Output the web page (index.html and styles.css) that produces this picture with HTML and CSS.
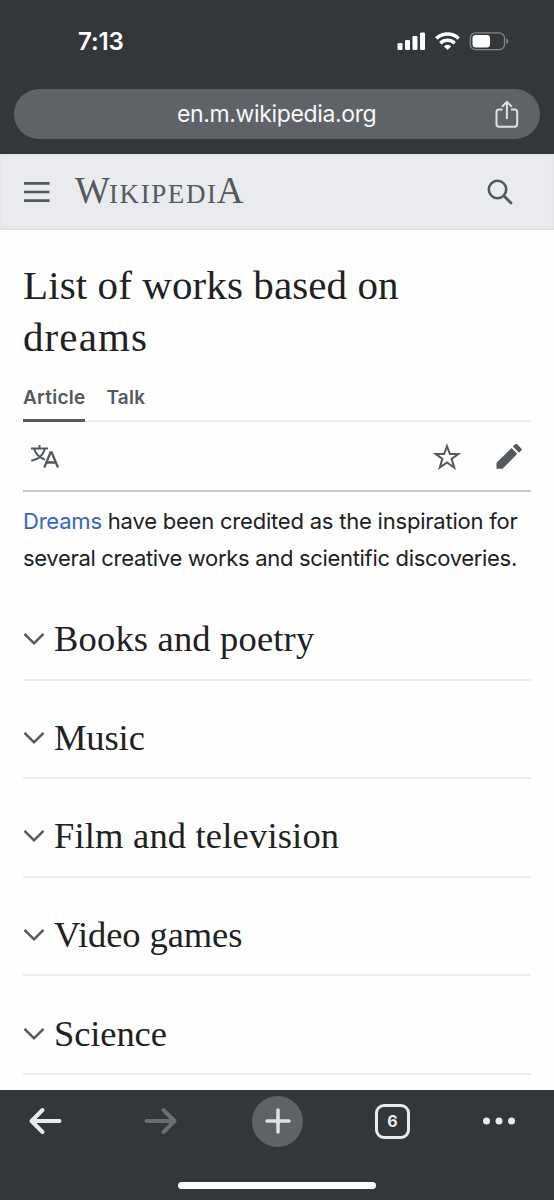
FILE: index.html
```html
<!DOCTYPE html>
<html lang="en">
<head>
<meta charset="utf-8">
<title>List of works based on dreams</title>
<link rel="stylesheet" href="styles.css">
</head>
<body>
<header class="browser-top">
  <div class="status">
    <span class="time">7:13</span>
    <svg class="status-icons" width="112" height="20" viewBox="0 0 112 20">
      <g fill="#fff">
        <rect x="0.5" y="11" width="5" height="7" rx="1.3"/>
        <rect x="8" y="8" width="5" height="10" rx="1.3"/>
        <rect x="15.500" y="4" width="5" height="14" rx="1.3"/>
        <rect x="23" y="0.500" width="5" height="17.500" rx="1.300"/>
      </g>
      <g fill="none" stroke="#fff" stroke-width="3.500">
        <path d="M39.300 6.600a16 16 0 0 1 22.400 0"/>
        <path d="M43.300 11.200a10.300 10.300 0 0 1 14.400 0"/>
      </g>
      <path d="M50.500 18l-3.700-3.700a5.300 5.300 0 0 1 7.400 0z" fill="#fff"/>
      <rect x="73.300" y="0.800" width="34.200" height="16.900" rx="5.300" fill="none" stroke="#85888a" stroke-width="1.300"/>
      <rect x="75.500" y="3" width="17.500" height="12.500" rx="3.300" fill="#fff"/>
      <path d="M109.300 6.200q1.900 1 1.900 3t-1.900 3z" fill="#85888a"/>
    </svg>
  </div>
  <div class="address">
    <span class="url">en.m.wikipedia.org</span>
    <svg class="share" width="26" height="30" viewBox="0 0 26 30" fill="none" stroke="#dfe1e5" stroke-width="2">
      <path d="M8.500 10.500H5Q2.500 10.500 2.500 13V25Q2.500 27.800 5 27.800H20.500Q23.200 27.800 23.200 25V13Q23.200 10.500 20.500 10.500H17M12.900 20V3M8 7.700L12.900 2.800L17.800 7.700"/>
    </svg>
  </div>
</header>

<nav class="site-header">
  <svg class="menu" width="26" height="22" viewBox="0 0 26 22" fill="#54595d"><path d="M0 1.100h25.500v2.600H0zM0 9.700h25.500v2.600H0zM0 18.300h25.500v2.600H0z"/></svg>
  <span class="wordmark"><span class="big">W</span><span class="small">IKIPEDI</span><span class="big last">A</span></span>
  <svg class="search" width="28" height="28" viewBox="0 0 28 28" fill="none" stroke="#54595d"><circle cx="11.500" cy="11.500" r="8.700" stroke-width="2.600"/><path d="M17.800 17.800L25 25" stroke-width="2.800" stroke-linecap="round"/></svg>
</nav>

<main class="page">
  <h1>List of works based on<br><span class="title-end">dreams</span></h1>
  <div class="tabs"><span class="tab active">Article</span><span class="tab talk">Talk</span></div>
  <div class="tools">
    <svg class="language" width="30" height="26" viewBox="0 0 30 26" fill="none" stroke="#54595d" stroke-width="2"><path d="M1 4.600H18M9.500 1V4.600M4.200 5C6 11 10.500 14 15 15.600M14.800 5C13 11.500 8 15.500 1.300 16.800"/><path d="M14.300 23.500L20.500 8.500H21.700L28 23.500M16.500 18.500H25.800" stroke-width="2.300"/></svg>
    <span class="actions">
      <svg width="28" height="28" viewBox="0 0 28 28" fill="none" stroke="#54595d" stroke-width="2"><path d="M14 3.200L16.900 11H25.200L18.600 15.900L21.200 24.500L14 19.400L6.800 24.500L9.400 15.900L2.800 11H11.100Z"/></svg>
      <svg width="28" height="28" viewBox="0 0 28 28" fill="#54595d"><path d="M1.500 19.700L16.500 5L22.300 10.800L7.500 25.800H1.500ZM17.900 3.600L20.200 1.300Q21.200 .3 22.200 1.300L26.300 5.400Q27.300 6.400 26.300 7.400L24 9.700Z"/></svg>
    </span>
  </div>
  <p class="intro"><span class="one"><a>Dreams</a> have been credited as the inspiration for</span><br><span class="two">several creative works and scientific discoveries.</span></p>
  <section><svg class="chevron" viewBox="0 0 22 14"><path d="M1.500 1.800L11 11.300L20.500 1.800"/></svg><h2>Books and poetry</h2></section>
  <section><svg class="chevron" viewBox="0 0 22 14"><path d="M1.500 1.800L11 11.300L20.500 1.800"/></svg><h2 class="compact">Music</h2></section>
  <section><svg class="chevron" viewBox="0 0 22 14"><path d="M1.500 1.800L11 11.300L20.500 1.800"/></svg><h2>Film and television</h2></section>
  <section><svg class="chevron" viewBox="0 0 22 14"><path d="M1.500 1.800L11 11.300L20.500 1.800"/></svg><h2 class="compact">Video games</h2></section>
  <section><svg class="chevron" viewBox="0 0 22 14"><path d="M1.500 1.800L11 11.300L20.500 1.800"/></svg><h2 class="compact">Science</h2></section>
</main>

<footer class="browser-bottom">
  <div class="controls">
    <svg width="34" height="28" viewBox="0 0 34 28" fill="none" stroke="#e8eaed" stroke-width="4" stroke-linecap="round" stroke-linejoin="round"><path d="M31.500 14H3.500M14.500 3L3.500 14L14.500 25"/></svg>
    <svg class="forward" width="34" height="28" viewBox="0 0 34 28" fill="none" stroke="#6b6e70" stroke-width="4" stroke-linecap="round" stroke-linejoin="round"><path d="M2.500 14H30.500M19.500 3L30.500 14L19.500 25"/></svg>
    <span class="new-tab"><svg width="28" height="28" viewBox="0 0 28 28" stroke="#dfe1e5" stroke-width="3.500" stroke-linecap="round"><path d="M14 3V25M3 14H25"/></svg></span>
    <span class="tab-count">6</span>
    <svg class="more" width="34" height="10" viewBox="0 0 34 10" fill="#e8eaed"><circle cx="4.500" cy="5" r="3.500"/><circle cx="17" cy="5" r="3.500"/><circle cx="29.500" cy="5" r="3.500"/></svg>
  </div>
  <div class="home-indicator"></div>
</footer>
</body>
</html>
```

FILE: styles.css
```css
* { box-sizing: border-box; }
body { margin: 0; width: 554px; height: 1200px; overflow: hidden; display: flex; flex-direction: column; background: #fefefe; color: #202122; font-family: Inter, sans-serif; }
svg { display: block; flex: none; }
span, h1, h2 { white-space: nowrap; }
.browser-top { height: 154px; flex: none; background: #34373a; padding: 0 14px; color: #fff; }
.status { height: 89px; display: flex; justify-content: space-between; padding: 32px 31px 0 64px; }
.time { font-size: 24px; font-weight: 600; line-height: 20px; letter-spacing: -.1px; }
.address { height: 50px; border-radius: 25px; background: #5f6367; display: flex; justify-content: space-between; padding: 0 20px 0 163px; align-items: center; }
.url { font-size: 23px; line-height: 50px; letter-spacing: -.36px; color: #f8f9fa; }
.site-header { height: 76px; flex: none; background: #eaebef; border-top: 1px solid #dfe0e4; border-bottom: 1px solid #dfe0e4; box-shadow: inset 0 0 4px #e1e2e6; display: flex; align-items: center; padding: 0 40px 0 24px; }
.wordmark { font-family: "Liberation Serif", serif; color: #54595d; display: flex; align-items: baseline; margin-left: 25px; line-height: 40px; }
.big { font-size: 37px; }
.small { font-size: 27px; letter-spacing: 1.6px; margin-left: -1px; }
.last { margin-left: -1px; }
.search { margin-left: auto; }
.page { flex: 1; padding: 29px 23px 0; min-height: 0; }
h1, h2 { margin: 0; font-family: "Liberation Serif", serif; font-weight: 400; }
h1 { font-size: 41px; line-height: 52px; letter-spacing: .1px; }
.title-end { letter-spacing: 1.1px; }
.tabs { height: 59px; display: flex; gap: 21px; border-bottom: 2px solid #eaecf0; font-size: 19px; font-weight: 600; color: #54595d; line-height: 24px; padding-top: 23px; letter-spacing: .25px; }
.tab { height: 36px; }
.active { border-bottom: 3px solid #54595d; }
.tools { height: 70px; border-bottom: 2px solid #c8ccd1; display: flex; justify-content: space-between; align-items: center; padding: 2px 8px 0 7px; }
.actions { display: flex; gap: 34px; }
.intro { margin: 11px 0 0; height: 79px; font-size: 22px; line-height: 37px; }
.one { letter-spacing: -.21px; }
.two { letter-spacing: -.32px; }
.intro a { color: #3366cc; }
section { height: 98.6px; border-bottom: 2px solid #eaecf0; display: flex; align-items: center; padding-top: 18px; }
.chevron { width: 22px; height: 14px; fill: none; stroke: #54595d; stroke-width: 2.5; }
h2 { font-size: 36.5px; line-height: 50px; margin-left: 9px; letter-spacing: .18px; }
.compact { letter-spacing: -.1px; }
.browser-bottom { height: 110px; flex: none; background: #34373a; }
.controls { height: 62px; display: flex; align-items: center; padding-left: 28px; }
.forward { margin-left: 82px; }
.new-tab { width: 51px; height: 51px; margin-left: 74px; border-radius: 50%; background: #5f6367; display: grid; place-items: center; }
.tab-count { width: 35px; height: 35px; margin-left: 72px; border: 3px solid #e8eaed; border-radius: 9px; display: grid; place-items: center; color: #e8eaed; font-size: 16px; font-weight: 700; line-height: 20px; }
.more { margin-left: 72px; }
.home-indicator { width: 198px; height: 7px; border-radius: 4px; background: #fff; margin: 30px auto 0; }
```
